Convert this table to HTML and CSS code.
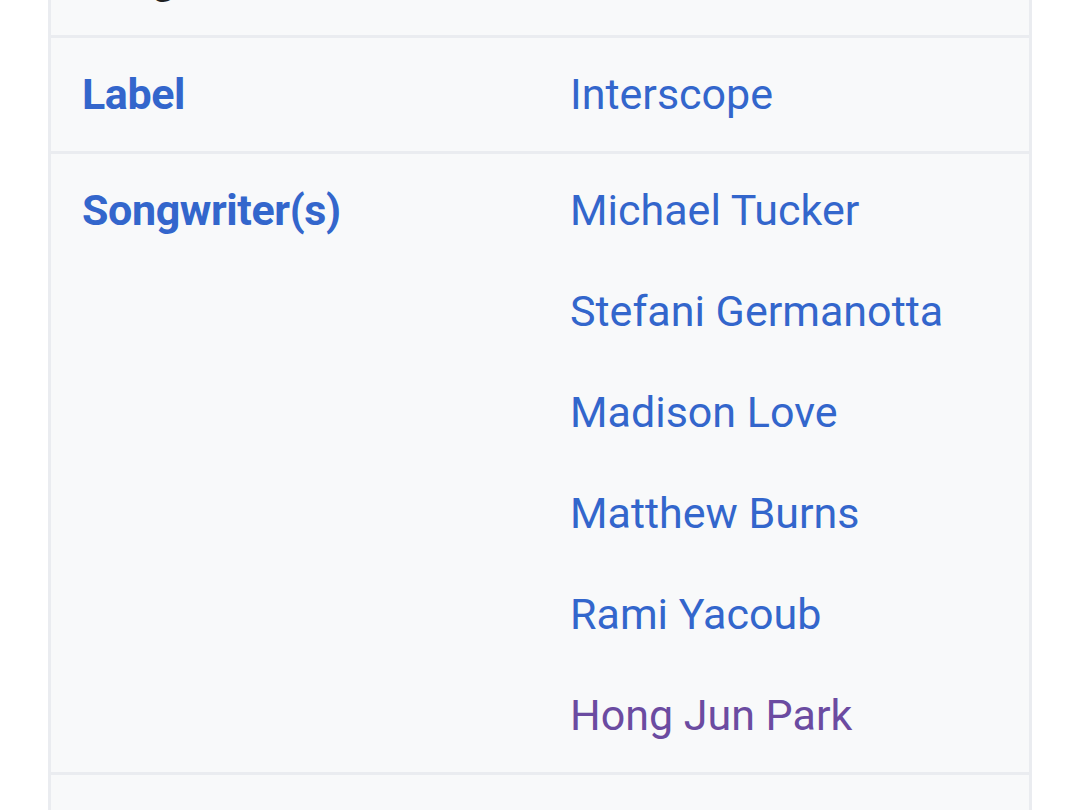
FILE: index.html
```html
<!DOCTYPE html>
<html lang="en">
<head>
<meta charset="utf-8">
<title>Infobox</title>
<link rel="stylesheet" href="styles.css">
</head>
<body>
<div class="infobox">
  <div class="row">
    <div class="label plain">Length</div>
    <div class="values"><span class="plain-value">2:37</span></div>
  </div>
  <div class="row">
    <div class="label"><a href="#">Label</a></div>
    <div class="values"><a href="#">Interscope</a></div>
  </div>
  <div class="row">
    <div class="label"><a href="#">Songwriter(s)</a></div>
    <div class="values">
      <a href="#">Michael Tucker</a>
      <a href="#">Stefani Germanotta</a>
      <a href="#">Madison Love</a>
      <a href="#">Matthew Burns</a>
      <a href="#">Rami Yacoub</a>
      <a href="#" class="visited">Hong Jun Park</a>
    </div>
  </div>
  <div class="row">
    <div class="label"><a href="#">Producer(s)</a></div>
    <div class="values">
      <a href="#">BloodPop</a>
      <a href="#">Burns</a>
    </div>
  </div>
</div>
</body>
</html>
```

FILE: styles.css
```css
html, body {
  margin: 0;
  padding: 0;
  background: #ffffff;
}

body {
  font-family: Roboto, "Noto Sans", sans-serif;
  font-size: 43px;
  color: #202122;
  overflow: hidden;
}

.infobox {
  margin: -81px 0 0 48px;
  width: 984px;
  box-sizing: border-box;
  border: 3px solid #eaecf0;
  background: #f8f9fa;
}

.row {
  display: grid;
  grid-template-columns: 519px 1fr;
  padding: 6px 0;
  line-height: 101px;
}

.row + .row {
  border-top: 3px solid #eaecf0;
}

.label {
  padding-left: 31px;
  font-weight: 700;
  letter-spacing: -0.4px;
}

.label.plain {
  color: #202122;
}

.values {
  display: flex;
  flex-direction: column;
}

a {
  color: #3366cc;
  text-decoration: none;
}

a.visited {
  color: #6b4ba1;
}

.plain-value {
  color: #202122;
}
```
